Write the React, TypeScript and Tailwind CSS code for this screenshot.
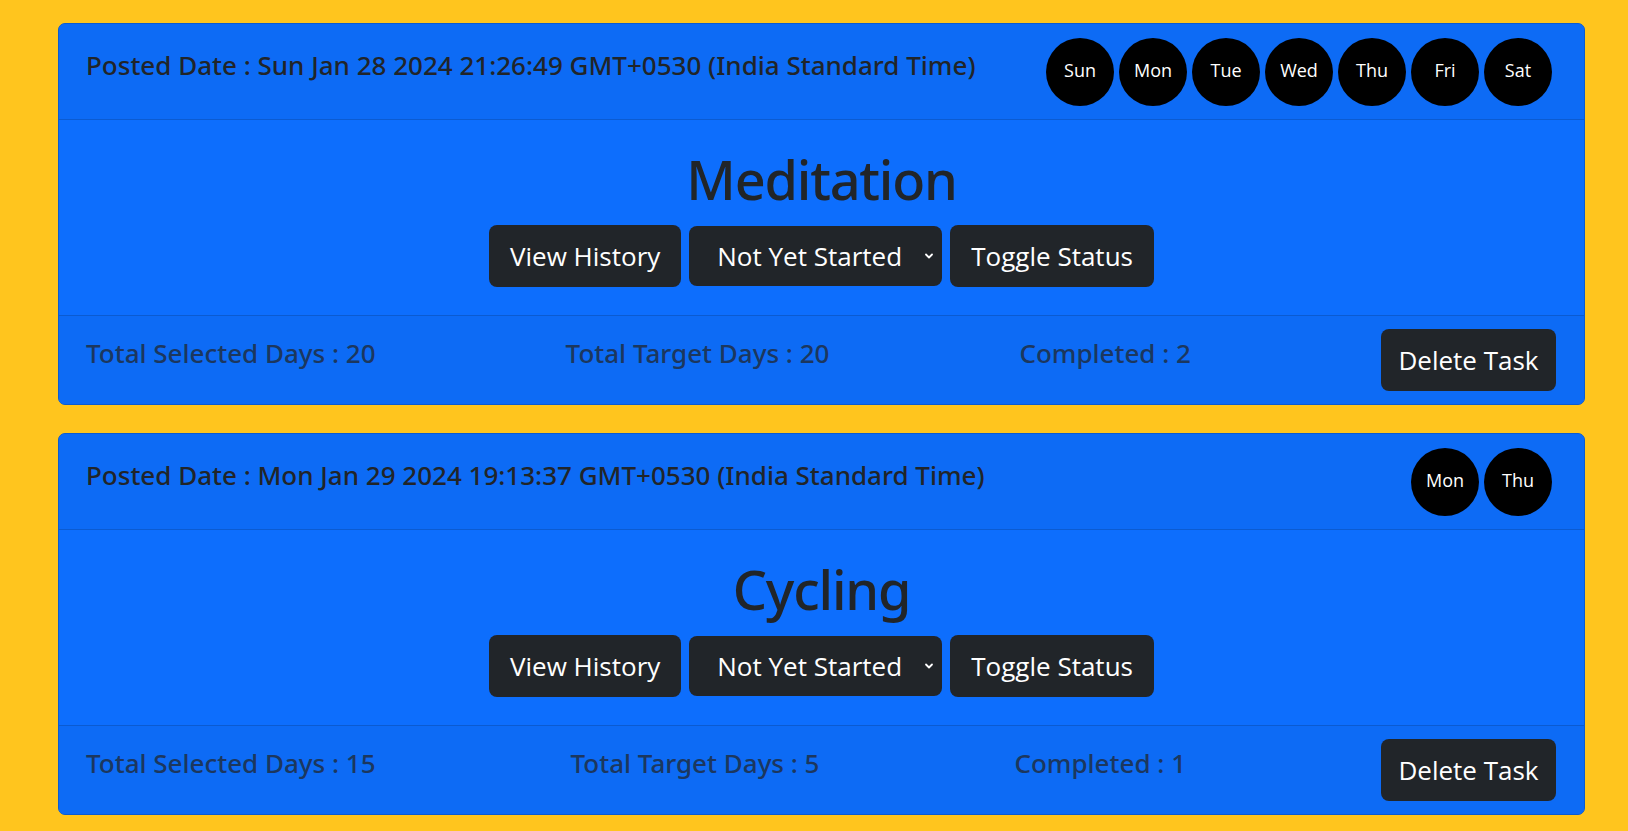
import { useState } from "react";

type Task = {
  posted: string;
  days: string[];
  title: string;
  selected: number;
  target: number;
  completed: number;
};

const TASKS: Task[] = [
  {
    posted: "Sun Jan 28 2024 21:26:49 GMT+0530 (India Standard Time)",
    days: ["Sun", "Mon", "Tue", "Wed", "Thu", "Fri", "Sat"],
    title: "Meditation",
    selected: 20,
    target: 20,
    completed: 2,
  },
  {
    posted: "Mon Jan 29 2024 19:13:37 GMT+0530 (India Standard Time)",
    days: ["Mon", "Thu"],
    title: "Cycling",
    selected: 15,
    target: 5,
    completed: 1,
  },
];

function TaskCard({ task }: { task: Task }) {
  const [status, setStatus] = useState("Not Yet Started");

  return (
    <div className="w-[1527px] rounded-[7px] border border-[#0b5bd1] bg-[#0d6efd] overflow-hidden">
      {/* Header */}
      <div className="h-[96px] border-b border-[#0b5bd1] bg-[#0d6bf5] flex items-center justify-between pl-[27px] pr-[32px]">
        <h4 className="mb-[12px] text-[26px] font-medium text-[#212529] font-['Noto_Sans',sans-serif]">
          Posted Date : {task.posted}
        </h4>
        <div className="flex gap-[5px]">
          {task.days.map(d => (
            <span
              key={d}
              className="w-[68px] h-[68px] pb-[3px] rounded-full bg-black text-white text-[18px] flex items-center justify-center"
            >
              {d}
            </span>
          ))}
        </div>
      </div>

      {/* Body */}
      <div className="h-[195px] flex flex-col items-center pt-[26px]">
        <h1 className="text-[54px] leading-[67px] tracking-[-1.2px] font-medium text-[#212529] font-['Noto_Sans',sans-serif]">
          {task.title}
        </h1>
        <div className="mt-[12px] flex items-center gap-[8px]">
          <button className="h-[62px] px-[21px] rounded-[8px] bg-[#212529] text-white text-[26px]">
            View History
          </button>
          <div className="relative">
            <select
              value={status}
              onChange={e => setStatus(e.target.value)}
              className="appearance-none w-[253px] h-[60px] pl-[28px] pr-[36px] rounded-[8px] bg-[#212529] text-white text-[26px] outline-none"
            >
              <option>Not Yet Started</option>
              <option>In Progress</option>
              <option>Completed</option>
            </select>
            <svg
              viewBox="0 0 16 16"
              className="absolute right-[7px] top-1/2 -translate-y-1/2 w-[12px] h-[12px] pointer-events-none"
              fill="none"
              stroke="white"
              strokeWidth="2.4"
              strokeLinecap="round"
              strokeLinejoin="round"
            >
              <path d="m4 6 4 4 4-4" />
            </svg>
          </div>
          <button className="h-[62px] px-[21px] rounded-[8px] bg-[#212529] text-white text-[26px]">
            Toggle Status
          </button>
        </div>
      </div>

      {/* Footer */}
      <div className="h-[89px] border-t border-[#0b5bd1] bg-[#0d6bf5] flex items-center justify-between pl-[27px] pr-[28px] font-['Noto_Sans',sans-serif]">
        <p className="mb-[14px] text-[26px] font-medium text-[#1c375e]">Total Selected Days : {task.selected}</p>
        <p className="mb-[14px] text-[26px] font-medium text-[#1c375e]">Total Target Days : {task.target}</p>
        <p className="mb-[14px] text-[26px] font-medium text-[#1c375e]">Completed : {task.completed}</p>
        <button className="h-[62px] w-[175px] rounded-[8px] bg-[#212529] text-white text-[26px] font-['Open_Sans',sans-serif]">
          Delete Task
        </button>
      </div>
    </div>
  );
}

export default function App() {
  return (
    <div className="h-[831px] overflow-hidden bg-[#ffc51e] pt-[23px] pl-[58px] font-['Open_Sans',sans-serif] flex flex-col gap-[28px]">
      {TASKS.map(t => (
        <TaskCard key={t.title} task={t} />
      ))}
    </div>
  );
}
